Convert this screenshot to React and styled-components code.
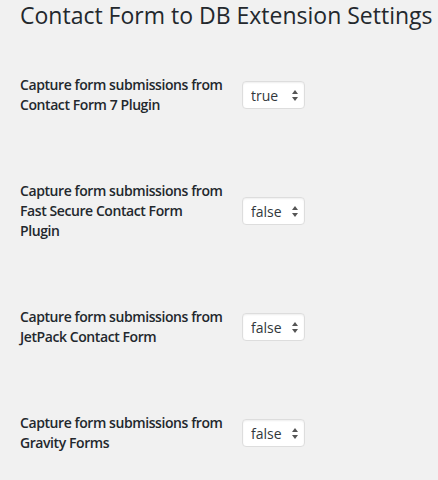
import React from "react";
import styled, { createGlobalStyle } from "styled-components";

const Global = createGlobalStyle`
  html, body { margin: 0; padding: 0; background: #f1f1f1; }
  body { font-family: "Open Sans", "Liberation Sans", sans-serif; color: #23282d; }
`;

const Page = styled.div`
  padding: 0 0 0 20px;
`;

const Title = styled.h2`
  margin: 0;
  font-size: 23px;
  font-weight: 400;
  line-height: 30px;
  color: #23282d;
  white-space: nowrap;
`;

const Row = styled.div`
  display: flex;
  align-items: center;
  gap: 12px;
  padding: 45px 0 21px;
`;

const Label = styled.label`
  width: 210px;
  font-size: 14px;
  font-weight: 600;
  line-height: 20px;
  letter-spacing: -0.42px;
  white-space: nowrap;
  color: #23282d;
`;

const SelectWrap = styled.div`
  position: relative;
  display: inline-block;
`;

const Select = styled.select`
  appearance: none;
  -webkit-appearance: none;
  width: 63px;
  height: 28px;
  padding: 0 20px 0 8px;
  border: 1px solid #dddddd;
  border-radius: 4px;
  background: #ffffff;
  box-shadow: inset 0 1px 2px rgba(0, 0, 0, 0.07);
  font-family: "Open Sans", "Liberation Sans", sans-serif;
  font-size: 14px;
  color: #32373c;
  outline: none;
`;

const Arrows = styled.svg`
  position: absolute;
  right: 7px;
  top: 9px;
  width: 6px;
  height: 11px;
  pointer-events: none;
`;

const settings = [
  { lines: ["Capture form submissions from", "Contact Form 7 Plugin"], value: "true" },
  { lines: ["Capture form submissions from", "Fast Secure Contact Form", "Plugin"], value: "false" },
  { lines: ["Capture form submissions from", "JetPack Contact Form"], value: "false" },
  { lines: ["Capture form submissions from", "Gravity Forms"], value: "false" },
];

export default function App() {
  return (
    <Page>
      <Global />
      <Title>Contact Form to DB Extension Settings</Title>
      {settings.map((s, i) => (
        <Row key={i}>
          <Label>
            {s.lines.map((l, j) => (
              <React.Fragment key={j}>
                {j > 0 && <br />}
                {l}
              </React.Fragment>
            ))}
          </Label>
          <SelectWrap>
            <Select defaultValue={s.value}>
              <option value="true">true</option>
              <option value="false">false</option>
            </Select>
            <Arrows viewBox="0 0 6 11">
              <path d="M3 0 L6 4 L0 4 Z" fill="#555" />
              <path d="M0 7 L6 7 L3 11 Z" fill="#555" />
            </Arrows>
          </SelectWrap>
        </Row>
      ))}
    </Page>
  );
}
